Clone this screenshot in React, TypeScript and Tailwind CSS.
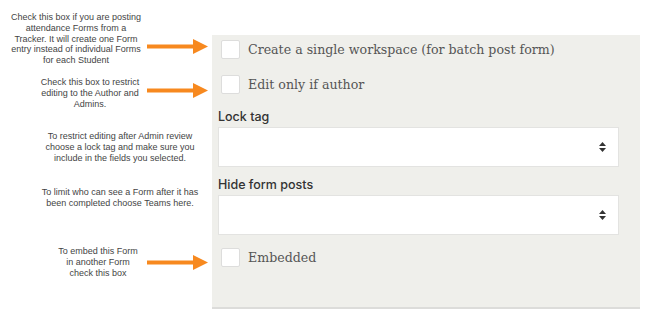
const Arrow = () => (
    <svg width="61" height="15" viewBox="0 0 61 15" className="shrink-0">
        <rect x="0" y="5.5" width="48" height="4" fill="#f7891f" />
        <polygon points="46,0 61,7.5 46,15" fill="#f7891f" />
    </svg>
);

const SelectArrows = () => (
    <svg width="7" height="10" viewBox="0 0 7 10">
        <polygon points="3.5,0 7,4 0,4" fill="#333" />
        <polygon points="0,6 7,6 3.5,10" fill="#333" />
    </svg>
);

const Checkbox = ({ label, className }: { label: string; className?: string }) => (
    <div className={"flex items-center gap-[8px] pl-[9px] " + (className ?? "")}>
        <div className="w-[19px] h-[19px] bg-white border border-[#dddddc] rounded-[2px] shrink-0" />
        <span className="text-[12.6px] leading-[19px] text-[#555] font-['DejaVu_Serif',serif]">{label}</span>
    </div>
);

const SelectField = ({ label, className }: { label: string; className?: string }) => (
    <div className={"pl-[6px] " + (className ?? "")}>
        <div className="text-[12.5px] leading-[16px] font-medium text-[#333] font-['Inter',sans-serif] mb-[2px]">
            {label}
        </div>
        <div className="w-[401px] h-[40px] bg-white border border-[#e3e3e1] flex items-center justify-end pr-[12px]">
            <SelectArrows />
        </div>
    </div>
);

const App = () => {
    return (
        <div className="w-[666px] h-[336px] bg-white flex overflow-hidden">
            {/* Left side - annotations */}
            <div className="w-[212px] shrink-0 flex flex-col pr-[4px] text-[9px] leading-[10.75px] text-[#444] font-['Liberation_Sans',Arial,sans-serif] whitespace-nowrap">
                <div className="flex justify-end items-start mt-[12px] h-[55px]">
                    <p className="w-[142px] text-center">
                        Check this box if you are posting<br />
                        attendance Forms from a<br />
                        Tracker. It will create one Form<br />
                        entry instead of individual Forms<br />
                        for each Student
                    </p>
                    <div className="mt-[27px]"><Arrow /></div>
                </div>

                <div className="flex justify-end items-start mt-[10px] h-[33px]">
                    <p className="w-[114px] text-center">
                        Check this box to restrict<br />
                        editing to the Author and<br />
                        Admins.
                    </p>
                    <div className="mt-[6px]"><Arrow /></div>
                </div>

                <div className="flex justify-end mt-[21px] h-[33px] pr-[8px]">
                    <p className="w-[160px] text-center">
                        To restrict editing after Admin review<br />
                        choose a lock tag and make sure you<br />
                        include in the fields you selected.
                    </p>
                </div>

                <div className="flex justify-end mt-[23px] h-[22px] pr-[8px]">
                    <p className="w-[160px] text-center">
                        To limit who can see a Form after it has<br />
                        been completed choose Teams here.
                    </p>
                </div>

                <div className="flex justify-end items-start mt-[37px] h-[33px]">
                    <p className="w-[98px] text-center">
                        To embed this Form<br />
                        in another Form<br />
                        check this box
                    </p>
                    <div className="mt-[9px]"><Arrow /></div>
                </div>
            </div>

            {/* Right side - settings panel */}
            <div className="w-[428px] h-[274px] mt-[35px] bg-[#efefeb] border-b-2 border-[#dcdcda] pt-[5px] flex flex-col">
                <Checkbox label="Create a single workspace (for batch post form)" />
                <Checkbox label="Edit only if author" className="mt-[16px]" />
                <SelectField label="Lock tag" className="mt-[15px]" />
                <SelectField label="Hide form posts" className="mt-[10px]" />
                <Checkbox label="Embedded" className="mt-[13px]" />
            </div>
        </div>
    );
};

export default App;
